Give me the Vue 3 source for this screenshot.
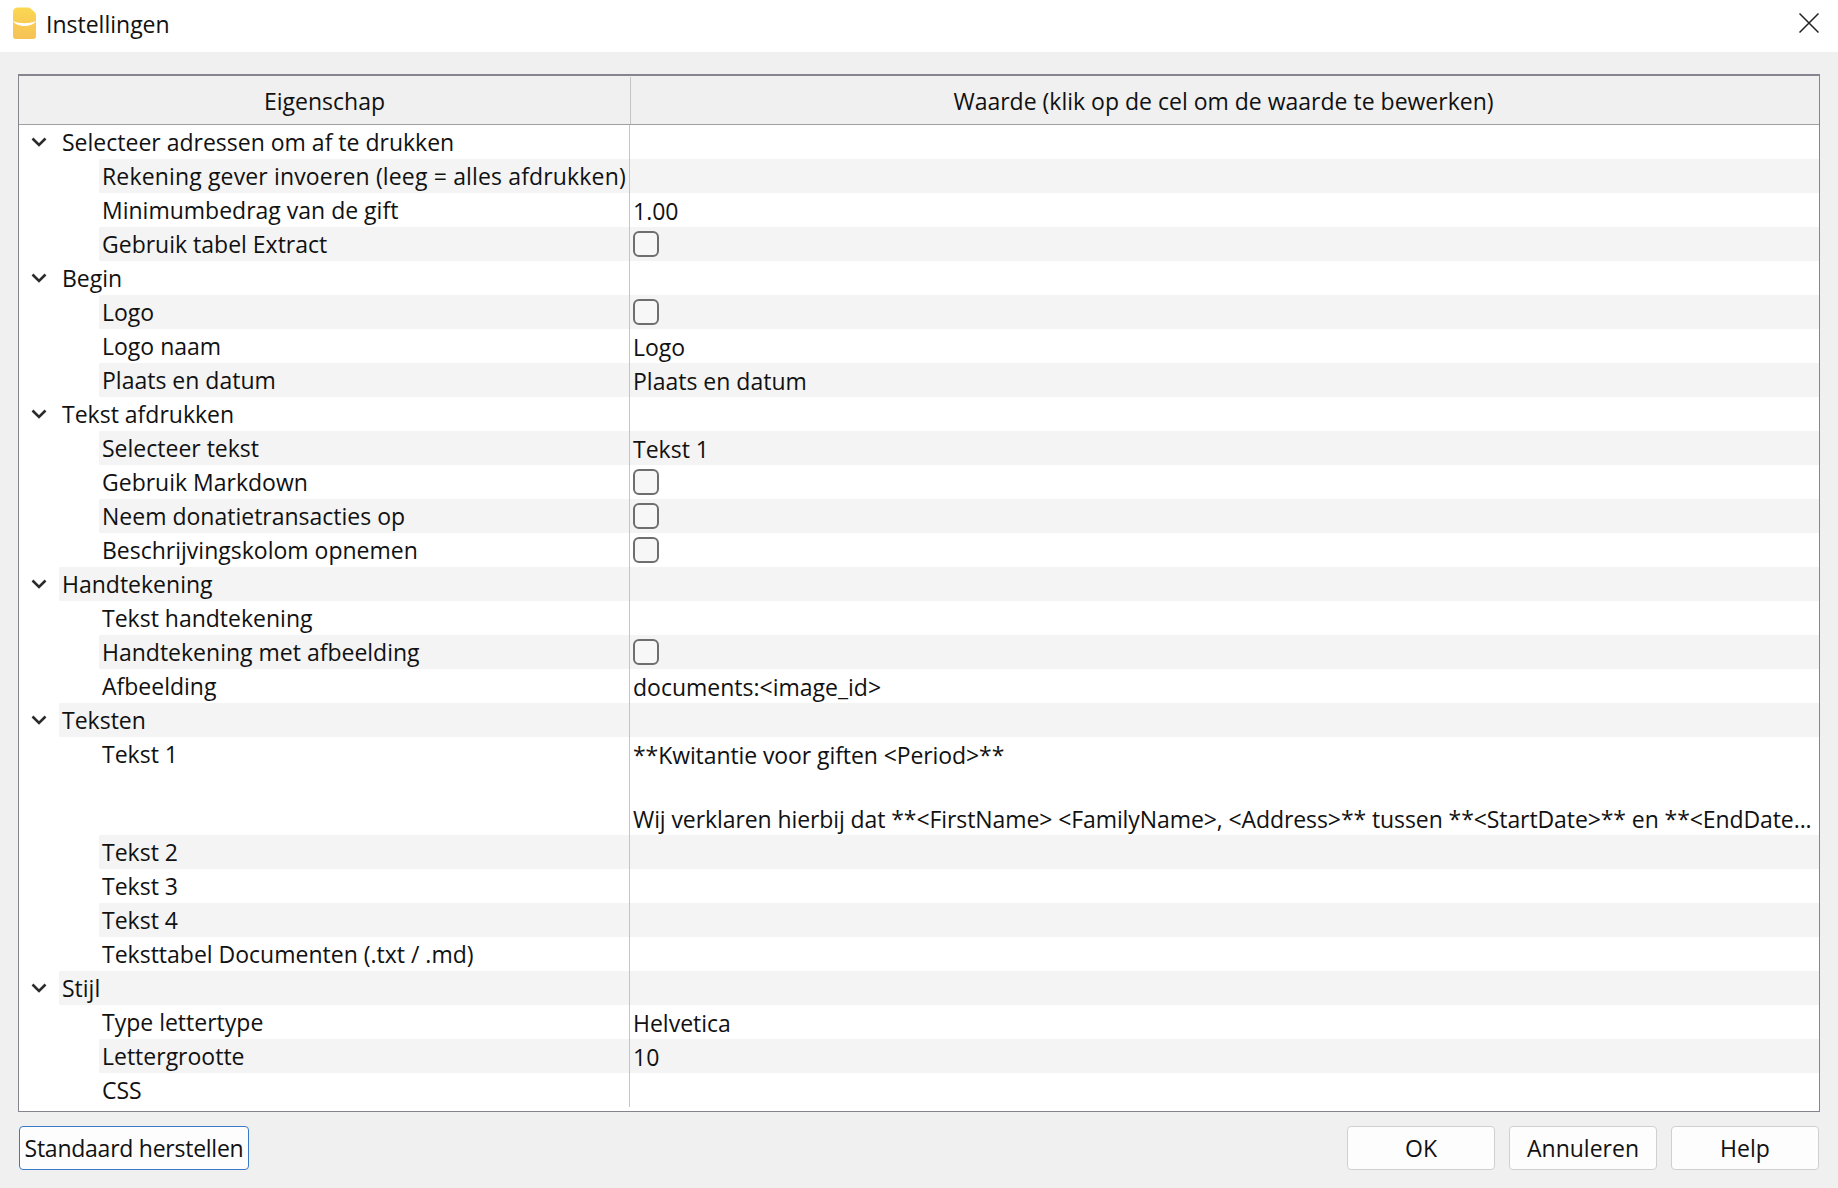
<script setup>
const rows = [
  { label: 'Selecteer adressen om af te drukken', group: true },
  { label: 'Rekening gever invoeren (leeg = alles afdrukken)', wide: true },
  { label: 'Minimumbedrag van de gift', value: '1.00' },
  { label: 'Gebruik tabel Extract', check: true },
  { label: 'Begin', group: true },
  { label: 'Logo', check: true },
  { label: 'Logo naam', value: 'Logo' },
  { label: 'Plaats en datum', value: 'Plaats en datum' },
  { label: 'Tekst afdrukken', group: true },
  { label: 'Selecteer tekst', value: 'Tekst 1' },
  { label: 'Gebruik Markdown', check: true },
  { label: 'Neem donatietransacties op', check: true },
  { label: 'Beschrijvingskolom opnemen', check: true },
  { label: 'Handtekening', group: true },
  { label: 'Tekst handtekening' },
  { label: 'Handtekening met afbeelding', check: true },
  { label: 'Afbeelding', value: 'documents:<image_id>' },
  { label: 'Teksten', group: true },
  {
    label: 'Tekst 1',
    lines: [
      '**Kwitantie voor giften <Period>**',
      '',
      'Wij verklaren hierbij dat **<FirstName> <FamilyName>, <Address>** tussen **<StartDate>** en **<EndDate...',
    ],
  },
  { label: 'Tekst 2' },
  { label: 'Tekst 3' },
  { label: 'Tekst 4' },
  { label: 'Teksttabel Documenten (.txt / .md)' },
  { label: 'Stijl', group: true },
  { label: 'Type lettertype', value: 'Helvetica' },
  { label: 'Lettergrootte', value: '10' },
  { label: 'CSS' },
];
</script>

<template>
  <div class="dialog">
    <header class="titlebar">
      <div class="title">
        <svg class="app-icon" viewBox="0 0 23 32" width="23" height="32">
          <defs>
            <linearGradient id="icon-fill" x1="0" y1="0" x2="0" y2="1">
              <stop offset="0" stop-color="#fbd752" />
              <stop offset="1" stop-color="#f6c155" />
            </linearGradient>
          </defs>
          <path d="M5 0.500h9c2 0 3 0.500 4.500 1.800l3 2.800c1 1 1.500 2 1.500 3.400V29c0 2-1 3-3 3H3c-2 0-3-1-3-3V5c0-3 2-4.500 5-4.500z" fill="url(#icon-fill)" />
          <path d="M0 14c7 3 16 3 23 0c-1 1.500-2 2.500-3.500 3.200c-5 2.400-11 2.400-16 0C2 16.500 1 15.500 0 14z" fill="#fff" />
        </svg>
        <span>Instellingen</span>
      </div>
      <svg class="close" viewBox="0 0 20 20" width="20" height="20">
        <path d="M0.500 0.500L19.500 19.500M19.500 0.500L0.500 19.500" stroke="#222" stroke-width="1.500" fill="none" />
      </svg>
    </header>

    <main class="content">
      <div class="table">
        <div class="head">
          <div class="head-cell prop">Eigenschap</div>
          <div class="head-cell waarde">Waarde (klik op de cel om de waarde te bewerken)</div>
        </div>
        <div
          v-for="(row, i) in rows"
          :key="i"
          class="row"
          :class="{ alt: i % 2 === 1, tall: row.lines }"
        >
          <div class="name" :class="{ group: row.group, wide: row.wide }">
            <svg v-if="row.group" class="chevron" viewBox="0 0 16 10" width="16" height="10">
              <path d="M1.500 1.500L8 8l6.500-6.500" stroke="#2b2b2b" stroke-width="2.600" fill="none" />
            </svg>
            <span>{{ row.label }}</span>
          </div>
          <div class="value">
            <span v-if="row.check" class="checkbox"></span>
            <template v-else-if="row.lines">
              <div v-for="(line, n) in row.lines" :key="n" class="line">{{ line }}</div>
            </template>
            <span v-else-if="row.value">{{ row.value }}</span>
          </div>
        </div>
      </div>

      <footer class="actions">
        <button class="btn restore" type="button">Standaard herstellen</button>
        <div class="right">
          <button class="btn" type="button">OK</button>
          <button class="btn" type="button">Annuleren</button>
          <button class="btn" type="button">Help</button>
        </div>
      </footer>
    </main>
  </div>
</template>

<style>
html, body {
  margin: 0;
  background: #f0f0f0;
}
</style>

<style scoped>
.dialog {
  width: 1838px;
  height: 1188px;
  display: flex;
  flex-direction: column;
  background: #f0f0f0;
  color: #111;
  font-family: "Open Sans", "Noto Sans", sans-serif;
  font-size: 23px;
  overflow: hidden;
}
.titlebar {
  height: 52px;
  flex: none;
  background: #fff;
  display: flex;
  align-items: center;
  justify-content: space-between;
  padding: 0 19px 6px 13px;
  box-sizing: border-box;
}
.title {
  display: flex;
  align-items: center;
  gap: 10px;
}
.title span {
  position: relative;
  top: 1px;
}
.content {
  flex: 1;
  padding: 22px 18px 0;
}
.table {
  width: 1802px;
  height: 1038px;
  box-sizing: border-box;
  border: 1px solid #85858f;
  border-top-width: 2px;
  background: #fff;
}
.head {
  display: flex;
  height: 49px;
  padding-top: 1px;
  box-sizing: border-box;
  background: #f0f0f0;
  border-bottom: 1px solid #a0a0a0;
}
.head-cell {
  flex: 1;
  display: flex;
  align-items: center;
  justify-content: center;
  padding-top: 1px;
}
.head-cell.waarde {
  padding-right: 3px;
}
.head-cell.prop {
  flex: none;
  width: 611px;
  border-right: 1px solid #c4c4c4;
}
.row {
  display: flex;
  height: 34px;
}
.row.tall {
  height: 98px;
}
.name {
  flex: none;
  width: 611px;
  padding-left: 83px;
  box-sizing: border-box;
  line-height: 35px;
  white-space: nowrap;
  border-right: 1px solid #c4c4c4;
}
.name.wide {
  letter-spacing: 0.15px;
}
.name.group {
  padding-left: 43px;
  position: relative;
}
.chevron {
  position: absolute;
  left: 12px;
  top: 12px;
}
.value {
  flex: 1;
  min-width: 0;
  padding-left: 3px;
  line-height: 36px;
  white-space: nowrap;
  overflow: hidden;
}
.row.alt .value {
  background: #f4f4f4;
}
.row.alt .name {
  background: linear-gradient(to right, #fff 80px, #f4f4f4 80px);
}
.row.alt .name.group {
  background: linear-gradient(to right, #fff 40px, #f4f4f4 40px);
}
.line {
  height: 32px;
  line-height: 32px;
  letter-spacing: -0.09px;
  white-space: nowrap;
}
.row.tall .value {
  padding-top: 2px;
}
.checkbox {
  display: block;
  width: 26px;
  height: 26px;
  margin-top: 4px;
  box-sizing: border-box;
  background: #f7f7f7;
  border: 2px solid #6e6e6e;
  border-radius: 6px;
}
.actions {
  display: flex;
  justify-content: space-between;
  margin-top: 14px;
  padding: 0 1px;
}
.right {
  display: flex;
  gap: 14px;
}
.btn {
  width: 148px;
  height: 44px;
  box-sizing: border-box;
  padding: 0;
  font: inherit;
  color: inherit;
  background: #fdfdfd;
  border: 1px solid #d0d0d0;
  border-radius: 4px;
}
.btn.restore {
  width: 230px;
  border-color: #3a78c8;
  letter-spacing: -0.25px;
}
</style>
